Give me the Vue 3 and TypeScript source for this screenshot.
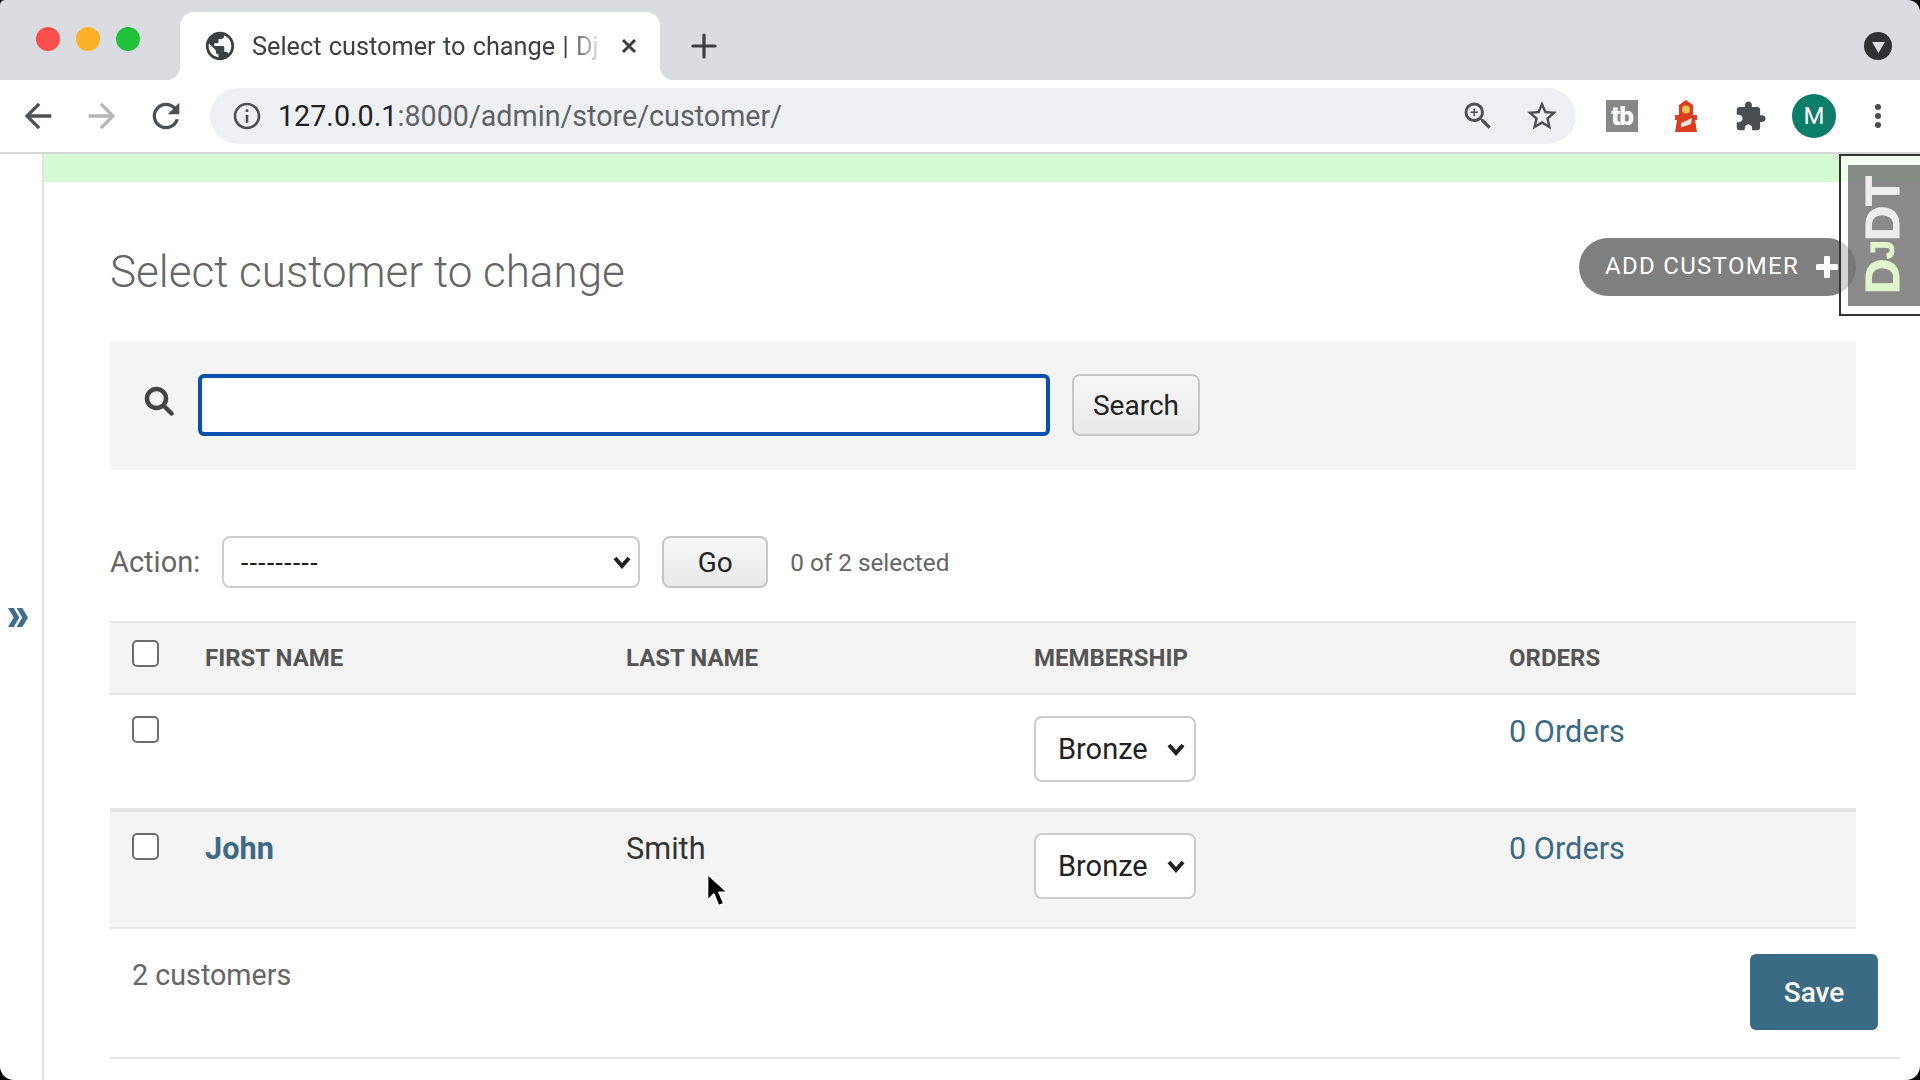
<script setup lang="ts">
import { ref } from 'vue'

interface Customer {
  id: number
  firstName: string
  lastName: string
  membership: string
  orders: string
}

const customers = ref<Customer[]>([
  { id: 2, firstName: '', lastName: '', membership: 'Bronze', orders: '0 Orders' },
  { id: 1, firstName: 'John', lastName: 'Smith', membership: 'Bronze', orders: '0 Orders' },
])
const memberships = ['Bronze', 'Silver', 'Gold']
const search = ref('')
</script>

<template>
  <div class="window">
    <div class="tabstrip">
      <div class="lights">
        <span class="light red"></span>
        <span class="light amber"></span>
        <span class="light green"></span>
      </div>
      <div class="tab">
        <svg class="globe" viewBox="0 0 24 24"><path d="M12 2C6.48 2 2 6.48 2 12s4.48 10 10 10 10-4.48 10-10S17.52 2 12 2zm-1 17.93c-3.95-.49-7-3.85-7-7.93 0-.62.08-1.21.21-1.79L9 15v1c0 1.1.9 2 2 2v1.93zm6.9-2.54c-.26-.81-1-1.39-1.9-1.39h-1v-3c0-.55-.45-1-1-1H8v-2h2c.55 0 1-.45 1-1V7h2c1.1 0 2-.9 2-2v-.41c2.93 1.19 5 4.06 5 7.41 0 2.08-.8 3.97-2.1 5.39z" /></svg>
        <span class="tab-title">Select customer to change | Dj</span>
        <svg class="tab-close" viewBox="0 0 18 18"><path d="M3 3l12 12M15 3L3 15" /></svg>
      </div>
      <svg class="new-tab" viewBox="0 0 26 26"><path d="M13 2v22M2 13h22" /></svg>
      <span class="tab-menu">
        <svg viewBox="0 0 14 12"><path d="M0 0h14L7 12z" /></svg>
      </span>
    </div>

    <div class="toolbar">
      <svg class="nav" viewBox="0 0 24 24"><path d="M20 11H7.83l5.59-5.59L12 4l-8 8 8 8 1.41-1.41L7.83 13H20v-2z" /></svg>
      <svg class="nav off" viewBox="0 0 24 24"><path d="M12 4l-1.41 1.41L16.17 11H4v2h12.17l-5.58 5.59L12 20l8-8z" /></svg>
      <svg class="nav" viewBox="0 0 24 24"><path d="M17.65 6.35A7.958 7.958 0 0 0 12 4c-4.42 0-7.99 3.58-7.99 8s3.57 8 7.99 8c3.73 0 6.84-2.55 7.73-6h-2.08A5.99 5.99 0 0 1 12 18c-3.31 0-6-2.69-6-6s2.69-6 6-6c1.66 0 3.14.69 4.22 1.78L13 11h7V4l-2.35 2.35z" /></svg>
      <div class="omnibox">
        <svg class="info" viewBox="0 0 24 24"><path d="M11 7h2v2h-2zm0 4h2v6h-2zm1-9C6.48 2 2 6.48 2 12s4.48 10 10 10 10-4.48 10-10S17.52 2 12 2zm0 18c-4.41 0-8-3.59-8-8s3.59-8 8-8 8 3.59 8 8-3.59 8-8 8z" /></svg>
        <span class="url"><b>127.0.0.1</b>:8000/admin/store/customer/</span>
        <svg class="omni-zoom" viewBox="0 0 24 24"><path d="M15.5 14h-.79l-.28-.27A6.471 6.471 0 0 0 16 9.5 6.5 6.5 0 1 0 9.5 16c1.61 0 3.09-.59 4.23-1.57l.27.28v.79l5 4.99L20.49 19l-4.99-5zm-6 0C7.01 14 5 11.99 5 9.5S7.01 5 9.5 5 14 7.01 14 9.5 11.99 14 9.5 14z" /><path d="M10 7H9v2H7v1h2v2h1v-2h2V9h-2z" /></svg>
        <svg class="omni-star" viewBox="0 0 24 24"><path d="M22 9.24l-7.19-.62L12 2 9.19 8.63 2 9.24l5.46 4.73L5.82 21 12 17.27 18.18 21l-1.63-7.03L22 9.24zM12 15.4l-3.76 2.27 1-4.28-3.32-2.88 4.38-.38L12 6.1l1.71 4.04 4.38.38-3.32 2.88 1 4.28L12 15.4z" /></svg>
      </div>
      <div class="extensions">
        <span class="ext-tb">tb</span>
        <svg class="ext-light" viewBox="0 0 22 32">
          <path fill="#dc3d20" d="M11 0l7 5v10h4v5h-2l2 12H0l2-12H0v-5h4V5z" />
          <circle fill="#f2c14e" cx="11" cy="9.5" r="4" />
          <path fill="#f3e3d8" d="M6 23l11-5-1 6-10 3.5z" />
        </svg>
        <svg class="ext-puzzle" viewBox="0 0 24 24"><path d="M20.5 11H19V7c0-1.1-.9-2-2-2h-4V3.5C13 2.12 11.88 1 10.5 1S8 2.12 8 3.5V5H4c-1.1 0-1.99.9-1.99 2v3.8H3.5c1.49 0 2.7 1.21 2.7 2.7s-1.21 2.7-2.7 2.7H2V20c0 1.1.9 2 2 2h3.8v-1.5c0-1.49 1.21-2.7 2.7-2.7 1.49 0 2.7 1.21 2.7 2.7V22H17c1.1 0 2-.9 2-2v-4h1.5c1.38 0 2.5-1.12 2.5-2.5S21.88 11 20.5 11z" /></svg>
        <span class="avatar">M</span>
        <span class="kebab"><i></i><i></i><i></i></span>
      </div>
    </div>

    <div class="page">
      <aside class="sidebar">
        <svg class="expand" viewBox="0 0 21 22"><path d="M0 1h6l6 10-6 10H0l6-10zM9 1h6l6 10-6 10H9l6-10z" /></svg>
      </aside>

      <main class="content">
        <div class="messages"></div>

        <div class="body">
          <div class="title-row">
            <h1>Select customer to change</h1>
            <a class="add-btn" href="#">
              <span class="add-label">Add customer</span>
              <svg viewBox="0 0 22 22"><path d="M11 2v18M2 11h18" /></svg>
            </a>
          </div>

          <form class="search-panel" @submit.prevent>
            <svg class="search-icon" viewBox="0 0 30 30"><circle cx="12.5" cy="12.5" r="9.5" /><path d="M19.5 19.5l8 8" /></svg>
            <input v-model="search" class="search-input" type="text" />
            <button class="btn search-btn" type="submit">Search</button>
          </form>

          <div class="actions">
            <label for="action">Action:</label>
            <select id="action" class="select action-select">
              <option>---------</option>
            </select>
            <button class="btn go-btn" type="button">Go</button>
            <span class="counter">0 of 2 selected</span>
          </div>

          <table class="results">
            <colgroup>
              <col class="col-check" />
              <col class="col-first" />
              <col class="col-last" />
              <col class="col-member" />
              <col />
            </colgroup>
            <thead>
              <tr>
                <th class="check"><input type="checkbox" class="box" /></th>
                <th>First name</th>
                <th>Last name</th>
                <th>Membership</th>
                <th>Orders</th>
              </tr>
            </thead>
            <tbody>
              <tr v-for="c in customers" :key="c.id">
                <td class="check"><input type="checkbox" class="box" /></td>
                <td><a v-if="c.firstName" class="name" href="#">{{ c.firstName }}</a></td>
                <td>{{ c.lastName }}</td>
                <td class="member">
                  <select class="select row-select" :value="c.membership">
                    <option v-for="m in memberships" :key="m">{{ m }}</option>
                  </select>
                </td>
                <td><a class="orders" href="#">{{ c.orders }}</a></td>
              </tr>
            </tbody>
          </table>

          <div class="paginator">
            <span>2 customers</span>
            <button class="save" type="button">Save</button>
          </div>
        </div>
      </main>
    </div>

    <div class="djdt">
      <div class="djdt-inner"><span class="dj">D<small>J</small></span>DT</div>
    </div>

    <svg class="cursor" viewBox="0 0 22 34">
      <path d="M2 1v25l6-6 4.5 11 5-2.2-4.6-10.6H21z" fill="#000" stroke="#fff" stroke-width="1.6" stroke-linejoin="round" />
    </svg>
  </div>
</template>

<style>
html, body {
  margin: 0;
  overflow: hidden;
  background: #000;
}
</style>

<style scoped>
.window {
  position: relative;
  width: 1920px;
  height: 1080px;
  overflow: hidden;
  background: #fff;
  font-family: Roboto, "Liberation Sans", sans-serif;
  color: #333;
}
.window::after {
  content: "";
  position: absolute;
  inset: 0;
  border-radius: 5px 12px 14px 14px;
  box-shadow: 0 0 0 20px #000;
  pointer-events: none;
}

/* tab strip */
.tabstrip {
  display: flex;
  align-items: flex-end;
  height: 80px;
  background: #dadce1;
}
.lights {
  display: flex;
  align-self: flex-start;
  gap: 16px;
  width: 180px;
  padding: 27px 0 0 36px;
  box-sizing: border-box;
}
.light {
  width: 24px;
  height: 24px;
  border-radius: 50%;
}
.light.red { background: #fc4f4d; }
.light.amber { background: #fdb127; }
.light.green { background: #22c13b; }

.tab {
  position: relative;
  display: flex;
  align-items: center;
  width: 480px;
  height: 68px;
  padding: 0 22px 0 24px;
  box-sizing: border-box;
  background: #fff;
  border-radius: 14px 14px 0 0;
}
.tab::before,
.tab::after {
  content: "";
  position: absolute;
  bottom: 0;
  width: 14px;
  height: 14px;
}
.tab::before {
  left: -14px;
  background: radial-gradient(circle at 0 0, transparent 14px, #fff 14.5px);
}
.tab::after {
  right: -14px;
  background: radial-gradient(circle at 100% 0, transparent 14px, #fff 14.5px);
}
.globe {
  flex: none;
  width: 34px;
  height: 34px;
  margin-left: -1px;
  fill: #3c4043;
}
.tab-title {
  flex: 1;
  margin-left: 15px;
  overflow: hidden;
  white-space: nowrap;
  font-size: 25.3px;
  word-spacing: 1px;
  color: #3c4043;
  -webkit-mask-image: linear-gradient(90deg, #000 90%, transparent 100%);
  mask-image: linear-gradient(90deg, #000 90%, transparent 100%);
}
.tab-close {
  flex: none;
  width: 18px;
  height: 18px;
  margin-left: 16px;
  fill: none;
  stroke: #3c4043;
  stroke-width: 3;
}
.new-tab {
  align-self: center;
  width: 26px;
  height: 26px;
  margin: 12px 0 0 31px;
  fill: none;
  stroke: #3c4043;
  stroke-width: 3.2;
  stroke-linecap: round;
}
.tab-menu {
  display: flex;
  align-items: center;
  justify-content: center;
  align-self: center;
  width: 28px;
  height: 28px;
  margin: 12px 28px 0 auto;
  border-radius: 50%;
  background: #303135;
}
.tab-menu svg {
  width: 13px;
  height: 11px;
  margin-top: 2px;
  fill: #dadce1;
}

/* toolbar */
.toolbar {
  display: flex;
  align-items: center;
  height: 72px;
  padding: 0 0 0 18px;
  box-sizing: content-box;
  background: #fff;
  border-bottom: 2px solid #d4d6d8;
}
.nav {
  flex: none;
  width: 40px;
  height: 40px;
  margin-right: 24px;
  fill: #4d5054;
}
.nav.off {
  fill: #b4b6b8;
}
.omnibox {
  display: flex;
  flex: none;
  align-items: center;
  width: 1366px;
  height: 56px;
  box-sizing: border-box;
  padding: 0 16px 0 21px;
  border-radius: 28px;
  background: #eef0f4;
}
.info {
  flex: none;
  width: 32px;
  height: 32px;
  fill: #4d5054;
}
.url {
  flex: 1;
  margin-left: 15px;
  font-size: 28.7px;
  color: #5f6368;
  white-space: nowrap;
}
.url b {
  font-weight: 400;
  color: #202124;
}
.omni-zoom {
  flex: none;
  width: 36px;
  height: 36px;
  fill: #4d5054;
}
.omni-star {
  flex: none;
  width: 36px;
  height: 36px;
  margin-left: 28px;
  fill: #4d5054;
}
.extensions {
  display: flex;
  flex: 1;
  align-items: center;
  padding-left: 30px;
}
.ext-tb {
  display: flex;
  flex: none;
  align-items: center;
  justify-content: center;
  width: 32px;
  height: 32px;
  background: #888;
  color: #fff;
  font-weight: 900;
  font-size: 26px;
  letter-spacing: -1px;
}
.ext-light {
  flex: none;
  width: 22px;
  height: 32px;
  margin-left: 37px;
}
.ext-puzzle {
  flex: none;
  width: 33px;
  height: 33px;
  margin-left: 37px;
  fill: #4a4d52;
}
.avatar {
  display: flex;
  flex: none;
  align-items: center;
  justify-content: center;
  width: 44px;
  height: 44px;
  margin-left: 25px;
  border-radius: 50%;
  background: #0b7d69;
  color: #fff;
  font-size: 24px;
}
.kebab {
  display: flex;
  flex: none;
  flex-direction: column;
  gap: 3px;
  margin-left: 39px;
}
.kebab i {
  width: 6px;
  height: 6px;
  border-radius: 50%;
  background: #4a4d52;
}

/* page */
.page {
  display: flex;
  height: 926px;
}
.sidebar {
  display: flex;
  flex: none;
  align-items: flex-start;
  width: 44px;
  box-sizing: border-box;
  border-right: 2px solid #e2e2e2;
}
.expand {
  flex: none;
  width: 20px;
  height: 21px;
  margin: 453px 0 0 8px;
  fill: #3b6e8f;
}
.content {
  flex: 1;
  min-width: 0;
}
.messages {
  height: 28px;
  background: #d6fbd3;
}
.body {
  padding: 0 64px 0 66px;
}
.title-row {
  display: flex;
  align-items: center;
  justify-content: space-between;
  padding-top: 56px;
}
h1 {
  margin: 10px 0 0;
  font-size: 44px;
  line-height: 48px;
  font-weight: 300;
  color: #666;
}
.add-btn {
  display: flex;
  align-items: center;
  gap: 17px;
  height: 58px;
  padding: 0 18px 0 26px;
  border-radius: 29px;
  background: #7f7f7f;
  color: #fff;
  font-size: 24px;
  letter-spacing: 1.3px;
  text-decoration: none;
  text-transform: uppercase;
}
.add-label {
  margin-top: -2px;
}
.add-btn svg {
  width: 22px;
  height: 22px;
  margin-top: -1px;
  fill: none;
  stroke: #fff;
  stroke-width: 6;
  stroke-linecap: round;
}

.search-panel {
  display: flex;
  align-items: center;
  height: 128px;
  box-sizing: border-box;
  margin-top: 46px;
  padding: 0 0 2px 34px;
  background: #f4f4f4;
}
.search-icon {
  flex: none;
  width: 30px;
  height: 30px;
  margin-top: -8px;
  fill: none;
  stroke: #444;
  stroke-width: 4.5;
  stroke-linecap: round;
}
.search-input {
  width: 852px;
  height: 62px;
  margin-left: 24px;
  box-sizing: border-box;
  border: 4px solid #0a50b0;
  border-radius: 6px;
  background: #fff;
  outline: none;
}
.btn {
  border: 2px solid #c6c6c6;
  border-radius: 8px;
  background: linear-gradient(#f7f7f7, #e9e9e9);
  color: #222;
  font-family: inherit;
  font-size: 28px;
  padding: 0;
}
.search-btn {
  width: 128px;
  height: 62px;
  margin-left: 22px;
}
.actions {
  display: flex;
  align-items: center;
  height: 52px;
  margin-top: 66px;
  font-size: 29px;
  color: #666;
}
.select {
  box-sizing: border-box;
  border: 2px solid #ccc;
  border-radius: 8px;
  -webkit-appearance: none;
  appearance: none;
  background: #fff url("data:image/svg+xml,%3Csvg xmlns='http://www.w3.org/2000/svg' viewBox='0 0 18 14'%3E%3Cpath d='M2 3l7 8 7-8' fill='none' stroke='%23222' stroke-width='4'/%3E%3C/svg%3E") no-repeat right 7px center / 18px 14px;
  font-family: inherit;
  color: #222;
  outline: none;
}
.action-select {
  width: 418px;
  height: 52px;
  margin-left: 22px;
  padding-left: 16px;
  font-size: 26px;
  font-family: "Liberation Sans", sans-serif;
}
.go-btn {
  width: 106px;
  height: 52px;
  margin-left: 22px;
}
.counter {
  margin-left: 22px;
  font-size: 24.3px;
}

.results {
  width: 100%;
  margin-top: 33px;
  table-layout: fixed;
  border-collapse: separate;
  border-spacing: 0;
}
.col-check { width: 95px; }
.col-first { width: 421px; }
.col-last { width: 408px; }
.col-member { width: 475px; }
.results th {
  box-sizing: border-box;
  height: 74px;
  padding: 0;
  border-top: 2px solid #e4e4e4;
  border-bottom: 2px solid #e4e4e4;
  background: #f4f4f4;
  color: #555;
  font-size: 24px;
  font-weight: 700;
  text-align: left;
  text-transform: uppercase;
}
.results td {
  box-sizing: border-box;
  height: 113px;
  padding: 19px 0 0;
  vertical-align: top;
  font-size: 30.7px;
  line-height: 36px;
  color: #333;
}
.results tbody tr:nth-child(2) td {
  height: 121px;
  border-top: 4px solid #e6e6e6;
  border-bottom: 2px solid #e6e6e6;
  background: #f4f4f4;
}
.results .check {
  padding-left: 22px;
}
.results td.check,
.results td.member {
  padding-top: 21px;
}
.results th.check {
  vertical-align: top;
  padding-top: 17px;
}
.box {
  display: block;
  width: 27px;
  height: 27px;
  margin: 0;
  -webkit-appearance: none;
  appearance: none;
  box-sizing: border-box;
  border: 2px solid #6c6c6c;
  border-radius: 5px;
  background: #fff;
}
.row-select {
  display: block;
  width: 162px;
  height: 66px;
  padding-left: 22px;
  font-size: 29px;
  background-position: right 9px center;
}
.name {
  font-weight: 700;
  color: #3b6a85;
  text-decoration: none;
}
.orders {
  color: #3b6a85;
  text-decoration: none;
}
.paginator {
  display: flex;
  align-items: flex-start;
  justify-content: space-between;
  margin-right: -44px;
  padding: 25px 22px 27px 22px;
  border-bottom: 2px solid #e6e6e6;
  color: #666;
  font-size: 28.7px;
}
.paginator span {
  margin-top: 4px;
}
.save {
  width: 128px;
  height: 76px;
  border: none;
  border-radius: 6px;
  background: #3b6a85;
  color: #fff;
  font-family: inherit;
  font-size: 28px;
  font-weight: 500;
}

/* overlays */
.djdt {
  position: absolute;
  top: 154px;
  right: -2px;
  width: 83px;
  height: 162px;
  box-sizing: border-box;
  padding: 9px 0 8px 7px;
  border: 2px solid #333;
  background: rgba(255, 255, 255, 0.65);
}
.djdt-inner {
  display: flex;
  align-items: center;
  justify-content: center;
  width: 100%;
  height: 100%;
  box-sizing: border-box;
  padding-left: 4px;
  background: rgba(60, 60, 60, 0.6);
  color: #eee;
  font-family: "Liberation Sans", sans-serif;
  font-size: 49px;
  font-weight: 700;
  line-height: 1;
  letter-spacing: -0.5px;
  -webkit-text-stroke: 1px currentColor;
  writing-mode: vertical-rl;
  transform: rotate(180deg);
}
.dj {
  color: #e0f6cb;
}
.dj small {
  font-size: 34px;
}
.cursor {
  position: absolute;
  top: 873px;
  left: 705px;
  width: 24px;
  height: 36px;
}
</style>
